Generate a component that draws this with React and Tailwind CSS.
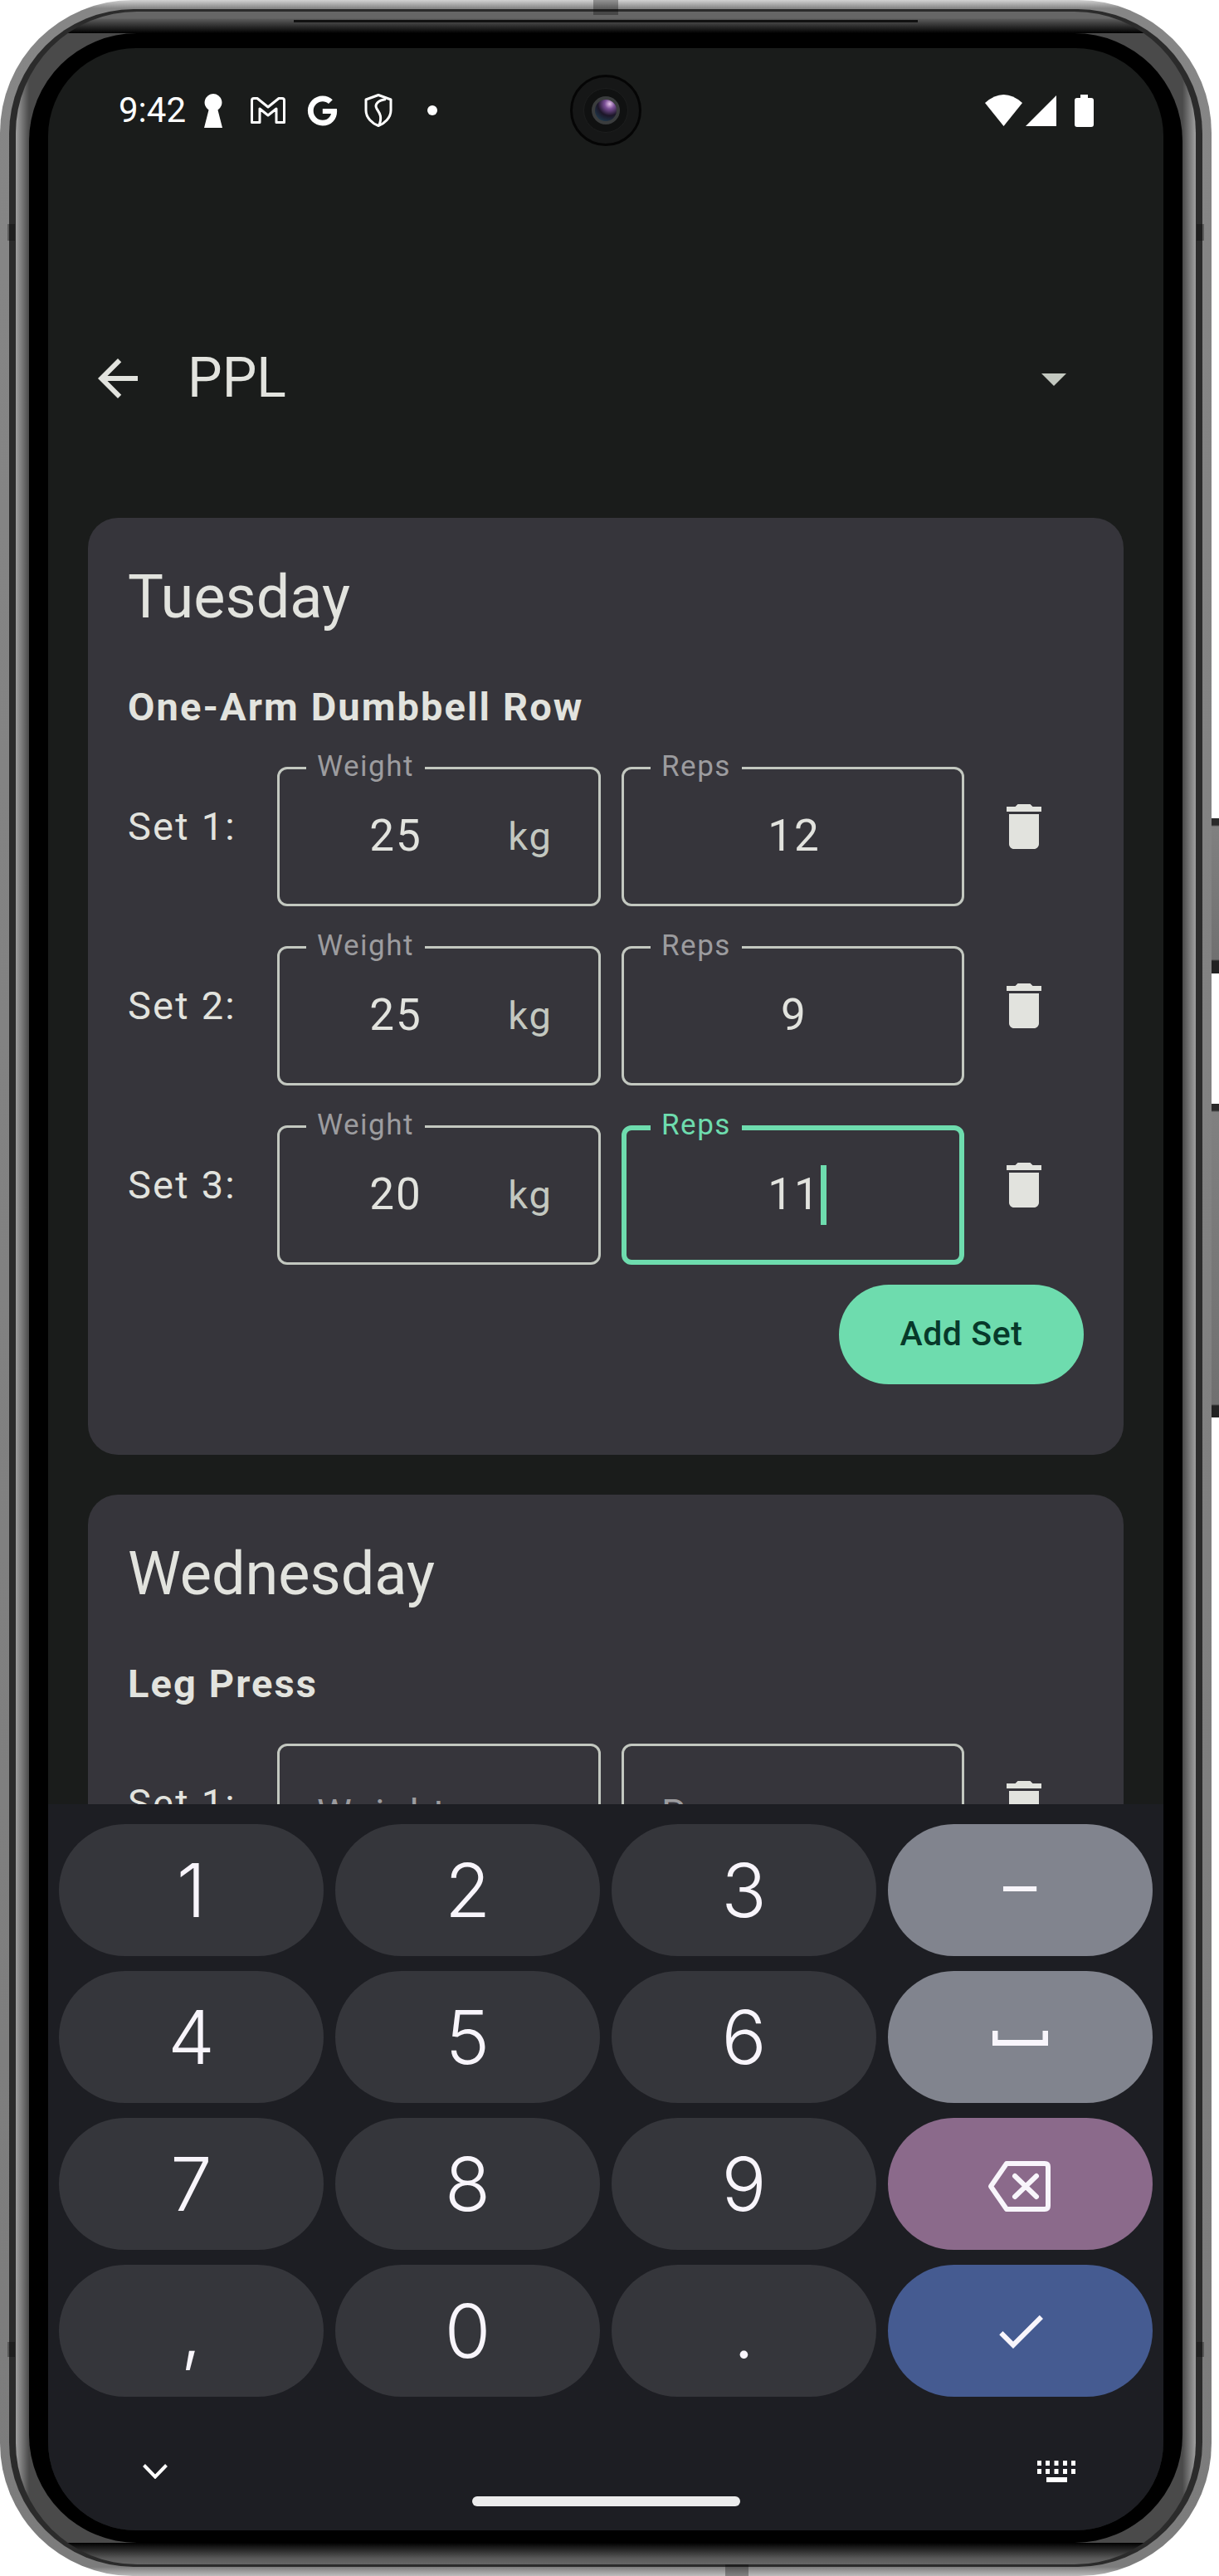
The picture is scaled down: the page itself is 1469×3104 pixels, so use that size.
import React from "react";
import { FaGoogle } from "react-icons/fa";

const Delete = () => (
  <svg width="72" height="72" viewBox="0 0 24 24" fill="#e2e3de" className="shrink-0">
    <path d="M6 19c0 1.100.9 2 2 2h8c1.100 0 2-.9 2-2V7H6v12zM19 4h-3.500l-1-1h-5l-1 1H5v2h14V4z" />
  </svg>
);

function Field({ width, label, value, suffix, focus, placeholder }) {
  const border = focus ? "border-[6px] border-[#6edcae]" : "border-[3px] border-[#c3c8c0]";
  return (
    <div className={`relative h-[168px] self-end rounded-[12px] flex items-center ${width} ${border}`}>
      {!placeholder && (
        <span
          className={`absolute h-[48px] px-[13px] bg-[#36353b] text-[35px] leading-[48px] tracking-[1.5px] ${
            focus ? "-top-[30px] left-[29px] text-[#6edcae]" : "-top-[27px] left-[32px] text-[#9c9c9f]"
          }`}
        >
          {label}
        </span>
      )}
      {placeholder ? (
        <span className="pl-[45px] text-[47px] tracking-[2px] text-[#9c9c9f]">{label}</span>
      ) : (
        <>
          <div className={`flex-1 flex justify-center text-[53px] tracking-[2px] text-[#e2e3de] ${suffix ? "ml-[5px]" : "pl-[3px]"}`}>
            <span className="relative">
              {value}
              {focus && (
                <span className="absolute left-full top-1/2 -translate-y-1/2 h-[72px] w-[7px] bg-[#6edcae]" />
              )}
            </span>
          </div>
          {suffix && <span className="pr-[55px] text-[47px] tracking-[2px] text-[#c3c8c0]">{suffix}</span>}
        </>
      )}
    </div>
  );
}

function SetRow({ n, weight, reps, focus, empty }) {
  return (
    <div className="flex items-center h-[192px]">
      <span className="w-[180px] shrink-0 text-[47px] tracking-[2.2px] text-[#e2e3de]">Set {n}:</span>
      <Field width="w-[390px]" label="Weight" value={weight} suffix="kg" placeholder={empty} />
      <div className="w-[25px] shrink-0" />
      <Field width="w-[413px]" label="Reps" value={reps} focus={focus} placeholder={empty} />
      <div className="w-[36px] shrink-0" />
      <Delete />
    </div>
  );
}

function DayCard({ day, exercise, children }) {
  return (
    <div className="mx-[48px] shrink-0 rounded-[36px] bg-[#36353b] pl-[48px] pr-[48px] pt-[49px] pb-[85px]">
      <div className="text-[72px] leading-[94px] text-[#e2e3de]">{day}</div>
      <div className="mt-[50px] mb-[13px] text-[47px] leading-[70px] font-bold tracking-[2.1px] text-[#e2e3de]">
        {exercise}
      </div>
      {children}
    </div>
  );
}

function Key({ bg = "bg-[#35363b]", children }) {
  return (
    <div className={`h-[159px] rounded-full flex items-center justify-center text-[90px] font-light font-[family-name:Inter,sans-serif] text-[#f8f5fb] ${bg}`}>
      {children}
    </div>
  );
}

const StatusBar = () => (
  <div className="h-[303px] shrink-0">
    <div className="h-[150px] flex items-center pl-[85px] pr-[84px] text-white">
      <span className="text-[42px] leading-none">9:42</span>
      <svg className="ml-[22px]" width="22" height="41" viewBox="0 0 22 41" fill="white">
        <path d="M11 0a10.500 10.500 0 0 1 5.500 19.400L22 41H0l5.500-21.600A10.500 10.500 0 0 1 11 0z" />
      </svg>
      <svg className="ml-[34px]" width="42" height="32" viewBox="0 0 42 32" fill="none" stroke="white" strokeWidth="3" strokeLinejoin="round">
        <path d="M1.500 30.500V4q0-2.500 2.500-2.500H8L21 12 34 1.500h4q2.500 0 2.500 2.500v26.500H31V14l-10 8-10-8v16.500z" />
      </svg>
      <FaGoogle className="ml-[26px]" size={37} color="white" />
      <svg className="ml-[32px]" width="34" height="40" viewBox="0 0 34 40" fill="none" stroke="white" strokeWidth="3" strokeLinejoin="round">
        <path d="M17 1.500 32 7v13c0 9-8 16-15 18.500C10 36 2 29 2 20V7z" />
        <path d="M26 6.500C16 8 12 13 15 18c3 5 7 8 3 20" />
      </svg>
      <span className="ml-[42px] w-[12px] h-[12px] rounded-full bg-white" />
      <div className="flex-1" />
      <svg width="45" height="38" viewBox="0 0 45 38" fill="white">
        <path d="M22.500 38 0 10Q22.500-10 45 10z" />
      </svg>
      <svg className="ml-[4px]" width="37" height="37" viewBox="0 0 37 37" fill="white">
        <path d="M0 37 37 0v37z" />
      </svg>
      <svg className="ml-[22px]" width="23" height="39" viewBox="0 0 23 39" fill="white">
        <path d="M7 0h9v4h4q3 0 3 3v29q0 3-3 3H3q-3 0-3-3V7q0-3 3-3h4z" />
      </svg>
    </div>
  </div>
);

const AppBar = () => (
  <div className="h-[190px] shrink-0 flex items-center pl-[48px] pr-[96px] text-[#e2e3de]">
    <svg width="72" height="72" viewBox="0 0 24 24" fill="#e2e3de">
      <path d="M20 11H7.830l5.590-5.590L12 4l-8 8 8 8 1.410-1.410L7.830 13H20v-2z" />
    </svg>
    <span className="ml-[48px] text-[66px] leading-none">PPL</span>
    <div className="flex-1" />
    <svg width="72" height="72" viewBox="0 0 24 24" fill="#c3c8c0">
      <path d="M7 10l5 5 5-5z" />
    </svg>
  </div>
);

const Keyboard = () => (
  <div className="flex-1 bg-[#1d1e23] pt-[24px]">
    <div className="grid grid-cols-4 gap-x-[14px] gap-y-[18px] px-[13px]">
      <Key>1</Key>
      <Key>2</Key>
      <Key>3</Key>
      <Key bg="bg-[#81848e]"><span className="text-[82px] font-normal font-[family-name:Roboto,sans-serif]">–</span></Key>
      <Key>4</Key>
      <Key>5</Key>
      <Key>6</Key>
      <Key bg="bg-[#81848e]">
        <svg className="mt-[3px]" width="67" height="18" viewBox="0 0 67 18" fill="#f8f5fb">
          <path d="M0 0h6.500v11h54V0H67v18H0z" />
        </svg>
      </Key>
      <Key>7</Key>
      <Key>8</Key>
      <Key>9</Key>
      <Key bg="bg-[#8b6a8b]">
        <svg className="mt-[5px] mr-[3px]" width="76" height="61" viewBox="0 0 76 61" fill="none" stroke="#f8f5fb" strokeWidth="6" strokeLinejoin="round" strokeLinecap="round">
          <path d="M4 30.500 23 3h46q4 0 4 4v47q0 4-4 4H23z" />
          <path d="M33 18l26 25M59 18 33 43" />
        </svg>
      </Key>
      <Key>,</Key>
      <Key>0</Key>
      <Key>.</Key>
      <Key bg="bg-[#455b91]">
        <svg width="72" height="72" viewBox="0 0 24 24" fill="#f8f5fb">
          <path d="M9 16.170 4.830 12l-1.420 1.410L9 19 21 7l-1.410-1.410z" />
        </svg>
      </Key>
    </div>
    <div className="mt-[60px] h-[60px] flex items-center justify-between pl-[114px] pr-[106px]">
      <svg width="30" height="18" viewBox="0 0 30 18" fill="none" stroke="white" strokeWidth="4">
        <path d="M1.500 1.500 15 15.500 28.500 1.500" />
      </svg>
      <svg width="46" height="26" viewBox="0 0 46 26" fill="white">
        <path d="M0 0h5v6H0zM10 0h5v6h-5zM20.500 0h5v6h-5zM31 0h5v6h-5zM41 0h5v6h-5zM0 10h5v6H0zM10 10h5v6h-5zM20.500 10h5v6h-5zM31 10h5v6h-5zM41 10h5v6h-5zM11 20h25v6H11z" />
      </svg>
    </div>
    <div className="mx-auto w-[323px] h-[12px] rounded-full bg-[#ececec]" />
  </div>
);

const Camera = () => (
  <div className="absolute left-1/2 -translate-x-1/2 top-[32px] w-[86px] h-[86px] rounded-full bg-[#161717] border-[3px] border-[#050505] flex items-center justify-center">
    <div className="w-[54px] h-[54px] rounded-full bg-[#101111] border border-[#1d1e1e] flex items-center justify-center">
      <div className="w-[34px] h-[34px] rounded-full bg-[#3a3c3d] flex items-center justify-center">
        <div className="w-[26px] h-[26px] rounded-full bg-[radial-gradient(circle_at_68%_20%,#e6c4ea_0,#7a4f96_22%,#1c1628_52%,#1f4a5c_100%)]" />
      </div>
    </div>
  </div>
);

export default function App() {
  return (
    <div className="relative w-[1469px] h-[3104px] bg-white overflow-hidden font-[family-name:Roboto,sans-serif]">
      {/* side buttons */}
      <div className="absolute left-[1459px] top-[986px] w-[10px] h-[187px] bg-[linear-gradient(180deg,#2a2a2a_0,#2a2a2a_8px,#808080_10px,#707070_170px,#222_172px,#222_100%)]" />
      <div className="absolute left-[1459px] top-[1330px] w-[10px] h-[378px] bg-[linear-gradient(180deg,#2a2a2a_0,#2a2a2a_8px,#808080_10px,#707070_362px,#222_364px,#222_100%)]" />

      {/* phone body */}
      <div className="relative w-[1460px] h-[3104px] rounded-[160px] p-[11px] bg-[linear-gradient(180deg,#d2d2d2_0,#868686_10px,#7c7c7c_calc(100%-11px),#bdbdbd_100%)]">
        <div className="h-full rounded-[150px] px-[8px] py-[3px] bg-[#2b2b2b]">
          <div className="h-full rounded-[146px] px-[16px] py-[26px] bg-[linear-gradient(180deg,#666_0,#666_8px,#5a5a5a_9px,#000_26px,transparent_26px,transparent_calc(100%-26px),#000_calc(100%-26px),#5a5a5a_calc(100%-7px),#666_100%),linear-gradient(90deg,#a0a0a0_0,#4a4a4a_16px,#4a4a4a_calc(100%-16px),#a0a0a0_100%)]">
            <div className="h-full rounded-[130px] bg-black px-[23px] pt-[18px] pb-[15px]">
              <div className="relative h-full rounded-[106px] overflow-hidden bg-[#1a1c1b] flex flex-col">
                <div className="h-[2116px] shrink-0 overflow-hidden flex flex-col">
                  <StatusBar />
                  <AppBar />
                  <div className="h-[73px] shrink-0" />
                  <DayCard day="Tuesday" exercise="One-Arm Dumbbell Row">
                    <div className="flex flex-col gap-[24px]">
                      <SetRow n={1} weight="25" reps="12" />
                      <SetRow n={2} weight="25" reps="9" />
                      <SetRow n={3} weight="20" reps="11" focus />
                    </div>
                    <div className="flex justify-end mt-[24px]">
                      <div className="w-[295px] h-[120px] rounded-full bg-[#6edcae] flex items-center justify-center text-[41px] font-medium tracking-[0.6px] text-[#07392a]">
                        Add Set
                      </div>
                    </div>
                  </DayCard>
                  <div className="h-[48px] shrink-0" />
                  <DayCard day="Wednesday" exercise="Leg Press">
                    <SetRow n={1} empty />
                  </DayCard>
                </div>
                <Keyboard />
                <Camera />
              </div>
            </div>
          </div>
        </div>
        {/* frame details */}
        <div className="absolute left-[354px] top-[24px] w-[752px] h-[3px] bg-[#111]" />
        <div className="absolute left-[715px] top-0 w-[30px] h-[18px] bg-black/30" />
        <div className="absolute left-[874px] bottom-0 w-[28px] h-[14px] bg-black/30" />
        <div className="absolute left-[9px] top-[270px] w-[9px] h-[20px] bg-black/30" />
        <div className="absolute left-[9px] top-[2822px] w-[9px] h-[18px] bg-black/30" />
        <div className="absolute right-[9px] top-[270px] w-[9px] h-[20px] bg-black/30" />
        <div className="absolute right-[9px] top-[2822px] w-[9px] h-[18px] bg-black/30" />
      </div>
    </div>
  );
}
